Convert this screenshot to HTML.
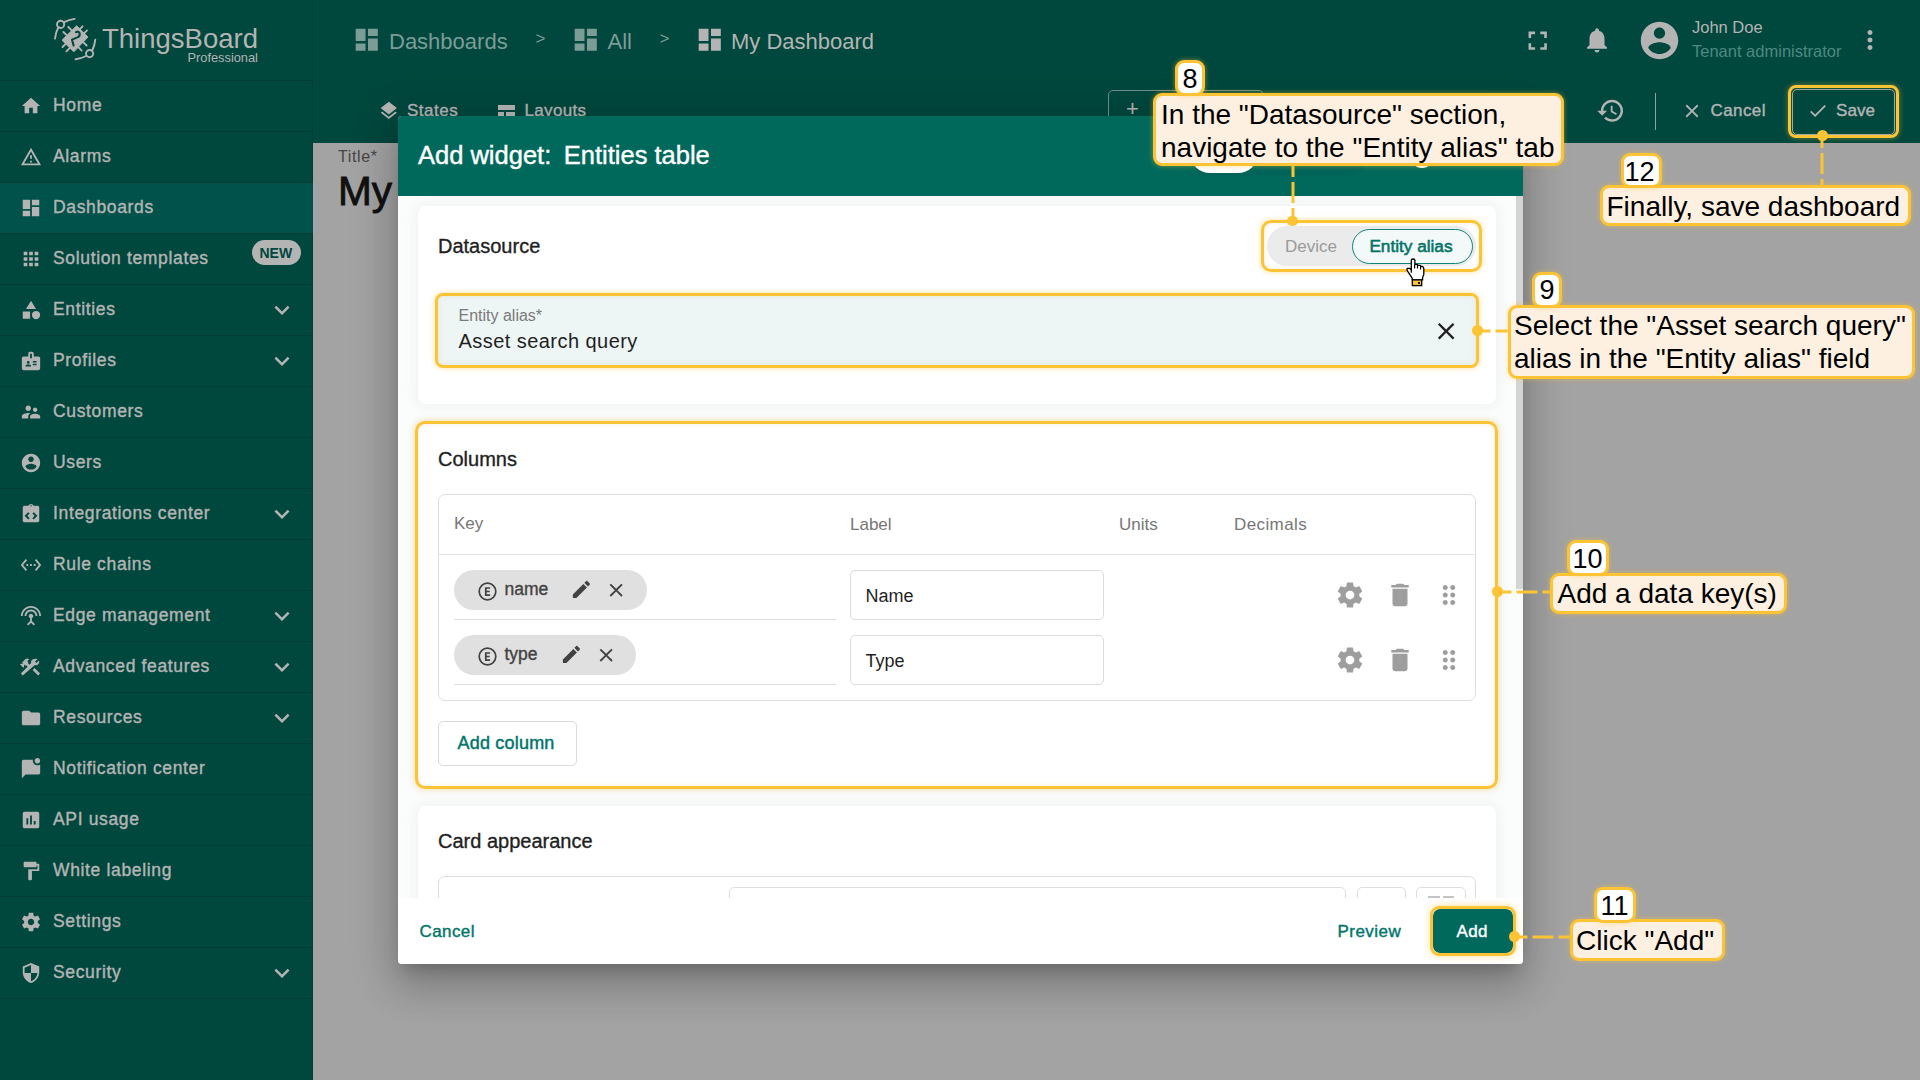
<!DOCTYPE html><html><head><meta charset="utf-8"><style>
html,body{margin:0;padding:0;width:1920px;height:1080px;overflow:hidden;background:#a3a3a3;font-family:"Liberation Sans", sans-serif;}
.t{position:absolute;white-space:nowrap;line-height:1;}
.i{position:absolute;display:block;}
.b{position:absolute;box-sizing:border-box;}

</style></head><body>
<div class="b" style="left:0.00px;top:0.00px;width:313.00px;height:1080.00px;background:#00473d;"></div>
<div class="b" style="left:312.00px;top:0.00px;width:1.00px;height:1080.00px;background:#003e36;"></div>
<div class="b" style="left:0.00px;top:80.00px;width:312.00px;height:1.00px;background:#003e35;"></div>
<svg class="i" style="left:20.00px;top:94.50px;" width="22" height="22" viewBox="0 0 24 24"><path fill="#b4b4b4" d="M10 20v-6h4v6h5v-8h3L12 3 2 12h3v8z"/></svg>
<div class="t" style="left:53.00px;top:96.79px;font-size:17.5px;color:#b4b4b4;font-weight:400;-webkit-text-stroke:0.4px #b4b4b4;letter-spacing:0.65px;">Home</div>
<div class="b" style="left:0.00px;top:131.00px;width:312.00px;height:1.00px;background:#003e35;"></div>
<svg class="i" style="left:20.00px;top:145.50px;" width="22" height="22" viewBox="0 0 24 24"><path fill="#b4b4b4" d="M12 5.99L19.53 19H4.47L12 5.99M12 2L1 21h22L12 2zm1 14h-2v2h2v-2zm0-6h-2v4h2v-4z"/></svg>
<div class="t" style="left:53.00px;top:147.79px;font-size:17.5px;color:#b4b4b4;font-weight:400;-webkit-text-stroke:0.4px #b4b4b4;letter-spacing:0.65px;">Alarms</div>
<div class="b" style="left:0.00px;top:183.00px;width:313.00px;height:50.00px;background:#00524a;"></div>
<div class="b" style="left:0.00px;top:182.00px;width:312.00px;height:1.00px;background:#003e35;"></div>
<svg class="i" style="left:20.00px;top:196.50px;" width="22" height="22" viewBox="0 0 24 24"><path fill="#b4b4b4" d="M3 13h8V3H3v10zm0 8h8v-6H3v6zm10 0h8V11h-8v10zm0-18v6h8V3h-8z"/></svg>
<div class="t" style="left:53.00px;top:198.79px;font-size:17.5px;color:#b4b4b4;font-weight:400;-webkit-text-stroke:0.4px #b4b4b4;letter-spacing:0.65px;">Dashboards</div>
<div class="b" style="left:0.00px;top:233.00px;width:312.00px;height:1.00px;background:#003e35;"></div>
<svg class="i" style="left:20.00px;top:247.50px;" width="22" height="22" viewBox="0 0 24 24"><path fill="#b4b4b4" d="M4 8h4V4H4v4zm6 12h4v-4h-4v4zm-6 0h4v-4H4v4zm0-6h4v-4H4v4zm6 0h4v-4h-4v4zm6-10v4h4V4h-4zm-6 4h4V4h-4v4zm6 6h4v-4h-4v4zm0 6h4v-4h-4v4z"/></svg>
<div class="t" style="left:53.00px;top:249.79px;font-size:17.5px;color:#b4b4b4;font-weight:400;-webkit-text-stroke:0.4px #b4b4b4;letter-spacing:0.65px;">Solution templates</div>
<div class="b" style="left:0.00px;top:284.00px;width:312.00px;height:1.00px;background:#003e35;"></div>
<svg class="i" style="left:20.00px;top:298.50px;" width="22" height="22" viewBox="0 0 24 24"><path fill="#b4b4b4" d="M12 2l-5.5 9h11z M13 17.5a4.5 4.5 0 1 0 9 0a4.5 4.5 0 1 0 -9 0z M3 13.5h8v8H3z"/></svg>
<div class="t" style="left:53.00px;top:300.79px;font-size:17.5px;color:#b4b4b4;font-weight:400;-webkit-text-stroke:0.4px #b4b4b4;letter-spacing:0.65px;">Entities</div>
<svg class="i" style="left:267.00px;top:294.50px;" width="30" height="30" viewBox="0 0 24 24"><path fill="#b4b4b4" d="M16.59 8.59L12 13.17 7.41 8.59 6 10l6 6 6-6z"/></svg>
<div class="b" style="left:0.00px;top:335.00px;width:312.00px;height:1.00px;background:#003e35;"></div>
<svg class="i" style="left:20.00px;top:349.50px;" width="22" height="22" viewBox="0 0 24 24"><path fill="#b4b4b4" d="M20 7h-5V4c0-1.1-.9-2-2-2h-2c-1.1 0-2 .9-2 2v3H4c-1.1 0-2 .9-2 2v11c0 1.1.9 2 2 2h16c1.1 0 2-.9 2-2V9c0-1.1-.9-2-2-2zM9 12c.83 0 1.5.67 1.5 1.5S9.830 15 9 15s-1.5-.67-1.5-1.5S8.17 12 9 12zm3 6H6v-.43c0-.6.36-1.15.92-1.39.64-.28 1.34-.43 2.08-.43s1.44.15 2.08.43c.55.24.92.78.92 1.39V18zm1-9h-2V4h2v5zm5 7.5h-4V15h4v1.5zm0-3h-4V12h4v1.5z"/></svg>
<div class="t" style="left:53.00px;top:351.79px;font-size:17.5px;color:#b4b4b4;font-weight:400;-webkit-text-stroke:0.4px #b4b4b4;letter-spacing:0.65px;">Profiles</div>
<svg class="i" style="left:267.00px;top:345.50px;" width="30" height="30" viewBox="0 0 24 24"><path fill="#b4b4b4" d="M16.59 8.59L12 13.17 7.41 8.59 6 10l6 6 6-6z"/></svg>
<div class="b" style="left:0.00px;top:386.00px;width:312.00px;height:1.00px;background:#003e35;"></div>
<svg class="i" style="left:20.00px;top:400.50px;" width="22" height="22" viewBox="0 0 24 24"><path fill="#b4b4b4" d="M16.5 12c1.38 0 2.49-1.12 2.49-2.5S17.88 7 16.5 7C15.12 7 14 8.12 14 9.5s1.12 2.5 2.5 2.5zM9 11c1.66 0 2.99-1.34 2.99-3S10.66 5 9 5C7.34 5 6 6.34 6 8s1.340 3 3 3zm7.5 3c-1.83 0-5.5.92-5.5 2.75V19h11v-2.25c0-1.83-3.67-2.75-5.5-2.75zM9 13c-2.34 0-7 1.17-7 3.5V19h7v-2.25c0-.85.33-2.34 2.37-3.47C10.5 13.1 9.660 13 9 13z"/></svg>
<div class="t" style="left:53.00px;top:402.79px;font-size:17.5px;color:#b4b4b4;font-weight:400;-webkit-text-stroke:0.4px #b4b4b4;letter-spacing:0.65px;">Customers</div>
<div class="b" style="left:0.00px;top:437.00px;width:312.00px;height:1.00px;background:#003e35;"></div>
<svg class="i" style="left:20.00px;top:451.50px;" width="22" height="22" viewBox="0 0 24 24"><path fill="#b4b4b4" d="M12 2C6.48 2 2 6.48 2 12s4.48 10 10 10 10-4.48 10-10S17.52 2 12 2zm0 3c1.66 0 3 1.34 3 3s-1.34 3-3 3-3-1.34-3-3 1.34-3 3-3zm0 14.2c-2.5 0-4.71-1.28-6-3.22.03-1.99 4-3.08 6-3.08 1.99 0 5.97 1.09 6 3.08-1.29 1.94-3.5 3.22-6 3.22z"/></svg>
<div class="t" style="left:53.00px;top:453.79px;font-size:17.5px;color:#b4b4b4;font-weight:400;-webkit-text-stroke:0.4px #b4b4b4;letter-spacing:0.65px;">Users</div>
<div class="b" style="left:0.00px;top:488.00px;width:312.00px;height:1.00px;background:#003e35;"></div>
<svg class="i" style="left:20.00px;top:502.50px;" width="22" height="22" viewBox="0 0 24 24"><path fill="#b4b4b4" d="M19 3h-4.18C14.4 1.84 13.3 1 12 1s-2.4.84-2.82 2H5c-1.1 0-2 .9-2 2v14c0 1.1.9 2 2 2h14c1.1 0 2-.9 2-2V5c0-1.1-.9-2-2-2zm-8.5 13.5L9 18l-4-4 4-4 1.5 1.5L8 14l2.5 2.5zM12 3.75c-.41 0-.75-.34-.75-.75s.34-.75.75-.75.75.34.75.75-.34.75-.75.75zM15 18l-1.5-1.5L16 14l-2.5-2.5L15 10l4 4-4 4z"/></svg>
<div class="t" style="left:53.00px;top:504.79px;font-size:17.5px;color:#b4b4b4;font-weight:400;-webkit-text-stroke:0.4px #b4b4b4;letter-spacing:0.65px;">Integrations center</div>
<svg class="i" style="left:267.00px;top:498.50px;" width="30" height="30" viewBox="0 0 24 24"><path fill="#b4b4b4" d="M16.59 8.59L12 13.17 7.41 8.59 6 10l6 6 6-6z"/></svg>
<div class="b" style="left:0.00px;top:539.00px;width:312.00px;height:1.00px;background:#003e35;"></div>
<svg class="i" style="left:20.00px;top:553.50px;" width="22" height="22" viewBox="0 0 24 24"><path fill="#b4b4b4" d="M7.77 6.76L6.23 5.48.82 12l5.41 6.52 1.54-1.28L3.42 12l4.35-5.24zM7 13h2v-2H7v2zm10-2h-2v2h2v-2zm-6 2h2v-2h-2v2zm6.77-7.52l-1.54 1.28L20.58 12l-4.35 5.24 1.54 1.28L23.18 12l-5.41-6.52z"/></svg>
<div class="t" style="left:53.00px;top:555.79px;font-size:17.5px;color:#b4b4b4;font-weight:400;-webkit-text-stroke:0.4px #b4b4b4;letter-spacing:0.65px;">Rule chains</div>
<div class="b" style="left:0.00px;top:590.00px;width:312.00px;height:1.00px;background:#003e35;"></div>
<svg class="i" style="left:20.00px;top:604.50px;" width="22" height="22" viewBox="0 0 24 24"><path fill="#b4b4b4" d="M12 5c-3.87 0-7 3.13-7 7h2c0-2.76 2.24-5 5-5s5 2.24 5 5h2c0-3.87-3.13-7-7-7zm1 9.29c.88-.39 1.5-1.26 1.5-2.29 0-1.38-1.12-2.5-2.5-2.5S9.5 10.62 9.5 12c0 1.02.62 1.9 1.5 2.29v3.3L7.59 21 9 22.41l3-3 3 3L16.41 21 13 17.59v-3.3zM12 1C5.93 1 1 5.93 1 12h2c0-4.97 4.03-9 9-9s9 4.030 9 9h2c0-6.07-4.93-11-11-11z"/></svg>
<div class="t" style="left:53.00px;top:606.79px;font-size:17.5px;color:#b4b4b4;font-weight:400;-webkit-text-stroke:0.4px #b4b4b4;letter-spacing:0.65px;">Edge management</div>
<svg class="i" style="left:267.00px;top:600.50px;" width="30" height="30" viewBox="0 0 24 24"><path fill="#b4b4b4" d="M16.59 8.59L12 13.17 7.41 8.59 6 10l6 6 6-6z"/></svg>
<div class="b" style="left:0.00px;top:641.00px;width:312.00px;height:1.00px;background:#003e35;"></div>
<svg class="i" style="left:20.00px;top:655.50px;" width="22" height="22" viewBox="0 0 24 24"><path fill="#b4b4b4" d="M13.783 15.172l2.121-2.121 5.996 5.996-2.121 2.121zM17.5 10c1.93 0 3.5-1.57 3.5-3.5 0-.58-.16-1.12-.41-1.6l-2.7 2.7-1.49-1.49 2.7-2.7c-.48-.25-1.02-.41-1.6-.41C13.57 3 12 4.57 12 6.5c0 .41.08.8.21 1.16l-1.85 1.85-1.78-1.78.71-.71-1.41-1.41L10 3.49c-1.17-1.17-3.07-1.17-4.24 0L2.22 7.03l1.41 1.41H.81l-.71.71 3.54 3.54.71-.71V9.15l1.41 1.41.71-.71 1.78 1.78-7.41 7.41 2.12 2.12L16.34 9.790c.36.13.75.21 1.16.21z"/></svg>
<div class="t" style="left:53.00px;top:657.79px;font-size:17.5px;color:#b4b4b4;font-weight:400;-webkit-text-stroke:0.4px #b4b4b4;letter-spacing:0.65px;">Advanced features</div>
<svg class="i" style="left:267.00px;top:651.50px;" width="30" height="30" viewBox="0 0 24 24"><path fill="#b4b4b4" d="M16.59 8.59L12 13.17 7.41 8.59 6 10l6 6 6-6z"/></svg>
<div class="b" style="left:0.00px;top:692.00px;width:312.00px;height:1.00px;background:#003e35;"></div>
<svg class="i" style="left:20.00px;top:706.50px;" width="22" height="22" viewBox="0 0 24 24"><path fill="#b4b4b4" d="M10 4H4c-1.1 0-1.99.9-1.99 2L2 18c0 1.1.9 2 2 2h16c1.1 0 2-.9 2-2V8c0-1.1-.9-2-2-2h-8l-2-2z"/></svg>
<div class="t" style="left:53.00px;top:708.79px;font-size:17.5px;color:#b4b4b4;font-weight:400;-webkit-text-stroke:0.4px #b4b4b4;letter-spacing:0.65px;">Resources</div>
<svg class="i" style="left:267.00px;top:702.50px;" width="30" height="30" viewBox="0 0 24 24"><path fill="#b4b4b4" d="M16.59 8.59L12 13.17 7.41 8.59 6 10l6 6 6-6z"/></svg>
<div class="b" style="left:0.00px;top:743.00px;width:312.00px;height:1.00px;background:#003e35;"></div>
<svg class="i" style="left:20.00px;top:757.50px;" width="22" height="22" viewBox="0 0 24 24"><path fill="#b4b4b4" d="M22 6.98V16c0 1.1-.9 2-2 2H6l-4 4V4c0-1.1.9-2 2-2h10.1c-.06.32-.1.66-.1 1 0 2.76 2.24 5 5 5 1.13 0 2.16-.39 3-1.02zM16 3c0 1.66 1.34 3 3 3s3-1.34 3-3-1.34-3-3-3-3 1.34-3 3z"/></svg>
<div class="t" style="left:53.00px;top:759.79px;font-size:17.5px;color:#b4b4b4;font-weight:400;-webkit-text-stroke:0.4px #b4b4b4;letter-spacing:0.65px;">Notification center</div>
<div class="b" style="left:0.00px;top:794.00px;width:312.00px;height:1.00px;background:#003e35;"></div>
<svg class="i" style="left:20.00px;top:808.50px;" width="22" height="22" viewBox="0 0 24 24"><path fill="#b4b4b4" d="M19 3H5c-1.1 0-2 .9-2 2v14c0 1.1.9 2 2 2h14c1.1 0 2-.9 2-2V5c0-1.1-.9-2-2-2zM9 17H7v-7h2v7zm4 0h-2V7h2v10zm4 0h-2v-4h2v4z"/></svg>
<div class="t" style="left:53.00px;top:810.79px;font-size:17.5px;color:#b4b4b4;font-weight:400;-webkit-text-stroke:0.4px #b4b4b4;letter-spacing:0.65px;">API usage</div>
<div class="b" style="left:0.00px;top:845.00px;width:312.00px;height:1.00px;background:#003e35;"></div>
<svg class="i" style="left:20.00px;top:859.50px;" width="22" height="22" viewBox="0 0 24 24"><path fill="#b4b4b4" d="M18 4V3c0-.55-.45-1-1-1H5c-.55 0-1 .45-1 1v4c0 .55.45 1 1 1h12c.55 0 1-.45 1-1V6h1v4H9v11c0 .55.45 1 1 1h2c.55 0 1-.45 1-1v-9h8V4h-3z"/></svg>
<div class="t" style="left:53.00px;top:861.79px;font-size:17.5px;color:#b4b4b4;font-weight:400;-webkit-text-stroke:0.4px #b4b4b4;letter-spacing:0.65px;">White labeling</div>
<div class="b" style="left:0.00px;top:896.00px;width:312.00px;height:1.00px;background:#003e35;"></div>
<svg class="i" style="left:20.00px;top:910.50px;" width="22" height="22" viewBox="0 0 24 24"><path fill="#b4b4b4" d="M19.43 12.98c.04-.32.07-.64.07-.98s-.03-.66-.07-.98l2.11-1.65c.19-.15.24-.42.12-.64l-2-3.46c-.12-.22-.39-.3-.61-.22l-2.49 1c-.52-.4-1.08-.73-1.69-.98l-.38-2.65C14.46 2.18 14.25 2 14 2h-4c-.25 0-.46.18-.49.42l-.38 2.65c-.61.25-1.17.59-1.69.98l-2.49-1c-.23-.09-.49 0-.61.22l-2 3.46c-.13.22-.07.49.12.64l2.11 1.65c-.04.32-.07.65-.07.98s.03.66.07.98l-2.11 1.65c-.19.15-.24.42-.12.64l2 3.46c.12.22.39.3.61.22l2.49-1c.52.4 1.08.73 1.69.98l.38 2.65c.03.24.24.42.49.42h4c.25 0 .46-.18.49-.42l.38-2.65c.61-.25 1.17-.59 1.69-.98l2.49 1c.23.09.49 0 .61-.22l2-3.46c.12-.22.07-.49-.12-.64l-2.11-1.65zM12 15.5c-1.93 0-3.5-1.57-3.5-3.5s1.57-3.5 3.5-3.5 3.5 1.57 3.5 3.5-1.57 3.5-3.5 3.5z"/></svg>
<div class="t" style="left:53.00px;top:912.79px;font-size:17.5px;color:#b4b4b4;font-weight:400;-webkit-text-stroke:0.4px #b4b4b4;letter-spacing:0.65px;">Settings</div>
<div class="b" style="left:0.00px;top:947.00px;width:312.00px;height:1.00px;background:#003e35;"></div>
<svg class="i" style="left:20.00px;top:961.50px;" width="22" height="22" viewBox="0 0 24 24"><path fill="#b4b4b4" d="M12 1L3 5v6c0 5.55 3.84 10.74 9 12 5.16-1.26 9-6.45 9-12V5l-9-4zm0 10.99h7c-.53 4.12-3.28 7.79-7 8.94V12H5V6.3l7-3.11v8.8z"/></svg>
<div class="t" style="left:53.00px;top:963.79px;font-size:17.5px;color:#b4b4b4;font-weight:400;-webkit-text-stroke:0.4px #b4b4b4;letter-spacing:0.65px;">Security</div>
<svg class="i" style="left:267.00px;top:957.50px;" width="30" height="30" viewBox="0 0 24 24"><path fill="#b4b4b4" d="M16.59 8.59L12 13.17 7.41 8.59 6 10l6 6 6-6z"/></svg>
<div class="b" style="left:0.00px;top:998.00px;width:312.00px;height:1.00px;background:#003e35;"></div>
<div class="b" style="left:251.50px;top:239.50px;width:49.00px;height:25.00px;background:#b4b4b4;border-radius:13px;"></div>
<div class="t" style="left:259.50px;top:245.85px;font-size:14px;color:#00473d;font-weight:700;">NEW</div>
<svg class="i" style="left:50px;top:14px" width="50" height="50" viewBox="0 0 50 50">
<g fill="none" stroke="#b4b4b4" stroke-width="1.9" stroke-linecap="round">
<circle cx="10.6" cy="10.4" r="3.6"/><circle cx="39.6" cy="39.6" r="3.6"/>
<path d="M14 8.2 Q19 5.6 24.6 4.9"/><path d="M8.3 13.5 Q5.6 18.5 5 24.6"/>
<path d="M42.2 36.5 Q44.6 31.5 45.3 25.6"/><path d="M36.2 42 Q31 44.6 25.6 45.3"/>
<path d="M18.3 13.0 L22.2 16.9 M13.4 18.0 L17.4 21.9 M32.6 12.3 L28.9 16.0 M37.0 16.4 L33.3 20.1 M36.6 31.5 L32.9 27.8 M31.7 36.6 L28.0 32.9 M12.5 33.0 L16.2 29.3 M16.4 37.3 L20.1 33.6"/>
</g>
<path fill="#b4b4b4" stroke="#b4b4b4" stroke-width="1" stroke-linejoin="round" d="M26.6 11.8 L38 23.1 L23.8 37.8 L12 26.2 Z"/>
<path fill="none" stroke="#00473d" stroke-width="2.1" stroke-linecap="round" stroke-linejoin="round" d="M26 18.2 Q28.6 16.6 29.6 19.2 Q30.4 22 27.4 23.4 L22 25.6 L23.6 31.6"/>
</svg>
<div class="t" style="left:102.00px;top:24.52px;font-size:27.5px;color:#b4b4b4;font-weight:400;">ThingsBoard</div>
<div class="t" style="left:187.50px;top:52.16px;font-size:12.8px;color:#b4b4b4;font-weight:400;">Professional</div>
<div class="b" style="left:313.00px;top:0.00px;width:1607.00px;height:143.00px;background:#00473d;"></div>
<svg class="i" style="left:352.40px;top:25.20px;" width="29.5" height="29.5" viewBox="0 0 24 24"><path fill="#7c9c96" d="M3 13h8V3H3v10zm0 8h8v-6H3v6zm10 0h8V11h-8v10zm0-18v6h8V3h-8z"/></svg>
<div class="t" style="left:389.00px;top:31.38px;font-size:22px;color:#7c9c96;font-weight:400;">Dashboards</div>
<div class="t" style="left:535.50px;top:30.11px;font-size:17px;color:#7c9c96;font-weight:400;">&gt;</div>
<svg class="i" style="left:571.30px;top:25.20px;" width="29.5" height="29.5" viewBox="0 0 24 24"><path fill="#7c9c96" d="M3 13h8V3H3v10zm0 8h8v-6H3v6zm10 0h8V11h-8v10zm0-18v6h8V3h-8z"/></svg>
<div class="t" style="left:607.50px;top:31.38px;font-size:22px;color:#7c9c96;font-weight:400;">All</div>
<div class="t" style="left:659.50px;top:30.11px;font-size:17px;color:#7c9c96;font-weight:400;">&gt;</div>
<svg class="i" style="left:695.20px;top:25.20px;" width="29.5" height="29.5" viewBox="0 0 24 24"><path fill="#b4b4b4" d="M3 13h8V3H3v10zm0 8h8v-6H3v6zm10 0h8V11h-8v10zm0-18v6h8V3h-8z"/></svg>
<div class="t" style="left:731.00px;top:31.38px;font-size:22px;color:#b4b4b4;font-weight:400;">My Dashboard</div>
<svg class="i" style="left:1521.80px;top:24.50px;" width="31.4" height="31.4" viewBox="0 0 24 24"><path fill="#b4b4b4" d="M7 14H5v5h5v-2H7v-3zm-2-4h2V7h3V5H5v5zm12 7h-3v2h5v-5h-2v3zM14 5v2h3v3h2V5h-5z"/></svg>
<svg class="i" style="left:1582.00px;top:25.00px;" width="30" height="30" viewBox="0 0 24 24"><path fill="#b4b4b4" d="M12 22c1.1 0 2-.9 2-2h-4c0 1.1.89 2 2 2zm6-6v-5c0-3.07-1.64-5.64-4.5-6.32V4c0-.83-.67-1.5-1.5-1.5s-1.5.67-1.5 1.5v.68C7.63 5.36 6 7.92 6 11v5l-2 2v1h16v-1l-2-2z"/></svg>
<svg class="i" style="left:1637.20px;top:18.00px;" width="45" height="45" viewBox="0 0 24 24"><path fill="#b4b4b4" d="M12 2C6.48 2 2 6.48 2 12s4.48 10 10 10 10-4.48 10-10S17.52 2 12 2zm0 3c1.66 0 3 1.34 3 3s-1.34 3-3 3-3-1.34-3-3 1.34-3 3-3zm0 14.2c-2.5 0-4.71-1.28-6-3.22.03-1.99 4-3.08 6-3.08 1.99 0 5.97 1.09 6 3.08-1.29 1.94-3.5 3.22-6 3.22z"/></svg>
<div class="t" style="left:1692.00px;top:19.43px;font-size:16.5px;color:#b4b4b4;font-weight:400;">John Doe</div>
<div class="t" style="left:1692.00px;top:43.03px;font-size:16.5px;color:#4e8a80;font-weight:400;">Tenant administrator</div>
<svg class="i" style="left:1855.00px;top:25.00px;" width="30" height="30" viewBox="0 0 24 24"><path fill="#b4b4b4" d="M12 8c1.1 0 2-.9 2-2s-.9-2-2-2-2 .9-2 2 .9 2 2 2zm0 2c-1.1 0-2 .9-2 2s.9 2 2 2 2-.9 2-2-.9-2-2-2zm0 6c-1.1 0-2 .9-2 2s.9 2 2 2 2-.9 2-2-.9-2-2-2z"/></svg>
<svg class="i" style="left:378.10px;top:99.90px;" width="21.6" height="21.6" viewBox="0 0 24 24"><path fill="#b4b4b4" d="M11.99 18.54l-7.37-5.73L3 14.07l9 7 9-7-1.63-1.27-7.38 5.74zM12 16l7.36-5.73L21 9l-9-7-9 7 1.63 1.27L12 16z"/></svg>
<div class="t" style="left:407.00px;top:102.21px;font-size:17px;color:#b4b4b4;font-weight:400;-webkit-text-stroke:0.4px #b4b4b4;letter-spacing:0.5px;">States</div>
<div class="b" style="left:497.60px;top:104.50px;width:17.20px;height:5.50px;background:#b4b4b4;"></div>
<div class="b" style="left:497.60px;top:111.50px;width:6.50px;height:7.00px;background:#b4b4b4;"></div>
<div class="b" style="left:506.00px;top:111.50px;width:8.80px;height:7.00px;background:#b4b4b4;"></div>
<div class="t" style="left:524.60px;top:102.21px;font-size:17px;color:#b4b4b4;font-weight:400;-webkit-text-stroke:0.4px #b4b4b4;letter-spacing:0.3px;">Layouts</div>
<div class="b" style="left:1108.00px;top:89.50px;width:156.00px;height:60.00px;border:1px solid #6f8e89;border-radius:5px;"></div>
<div class="t" style="left:1126.00px;top:98.38px;font-size:22px;color:#b4b4b4;font-weight:400;">+</div>
<svg class="i" style="left:1595.50px;top:96.10px;" width="29.5" height="29.5" viewBox="0 0 24 24"><path fill="#b4b4b4" d="M13 3c-4.97 0-9 4.03-9 9H1l3.89 3.89.07.14L9 12H6c0-3.87 3.13-7 7-7s7 3.13 7 7-3.13 7-7 7c-1.93 0-3.68-.79-4.94-2.06l-1.42 1.42C8.27 19.99 10.51 21 13 21c4.97 0 9-4.03 9-9s-4.03-9-9-9zm-1 5v5l4.28 2.54.72-1.21-3.5-2.08V8H12z"/></svg>
<div class="b" style="left:1655.00px;top:93.00px;width:1.20px;height:37.00px;background:#8aa39e;"></div>
<svg class="i" style="left:1681.00px;top:100.00px;" width="22" height="22" viewBox="0 0 24 24"><path fill="#b4b4b4" d="M19 6.41L17.59 5 12 10.59 6.41 5 5 6.41 10.59 12 5 17.59 6.41 19 12 13.41 17.59 19 19 17.59 13.41 12z"/></svg>
<div class="t" style="left:1710.50px;top:102.21px;font-size:17px;color:#b4b4b4;font-weight:400;-webkit-text-stroke:0.4px #b4b4b4;letter-spacing:0.4px;">Cancel</div>
<div class="b" style="left:1792.30px;top:88.60px;width:103.00px;height:46.00px;border:1px solid #9aa7a4;border-radius:5px;"></div>
<svg class="i" style="left:1806.90px;top:100.40px;" width="21.6" height="21.6" viewBox="0 0 24 24"><path fill="#b4b4b4" d="M9 16.17L4.83 12l-1.42 1.41L9 19 21 7l-1.41-1.41z"/></svg>
<div class="t" style="left:1836.00px;top:102.21px;font-size:17px;color:#b4b4b4;font-weight:400;-webkit-text-stroke:0.4px #b4b4b4;letter-spacing:0.1px;">Save</div>
<div class="t" style="left:338.00px;top:149.06px;font-size:16px;color:#464646;font-weight:400;letter-spacing:0.6px;">Title*</div>
<div class="t" style="left:338.00px;top:170.52px;font-size:40.5px;color:#111111;font-weight:400;-webkit-text-stroke:0.9px #111111;">My</div>
<div class="b" style="left:398.00px;top:116.00px;width:1125.00px;height:848.00px;background:#ffffff;border-radius:4px;box-shadow:0 11px 15px -7px rgba(0,0,0,.2),0 24px 38px 3px rgba(0,0,0,.14),0 9px 46px 8px rgba(0,0,0,.12);"></div>
<div class="b" style="left:398.00px;top:116.00px;width:1125.00px;height:80.00px;background:#00695c;border-radius:4px 4px 0 0;"></div>
<div class="t" style="left:418.00px;top:142.71px;font-size:25.5px;color:#ffffff;font-weight:400;-webkit-text-stroke:0.4px #ffffff;">Add widget:</div>
<div class="t" style="left:563.80px;top:142.71px;font-size:25.5px;color:#ffffff;font-weight:400;-webkit-text-stroke:0.4px #ffffff;">Entities table</div>
<div class="b" style="left:1185.00px;top:128.00px;width:185.00px;height:48.00px;background:#00645a;border-radius:24px;"></div>
<div class="b" style="left:1189.50px;top:132.00px;width:68.00px;height:41.00px;background:#ffffff;border-radius:20px;"></div>
<div class="b" style="left:1411.00px;top:140.00px;width:22.00px;height:28.00px;background:#ffffff;border-radius:11px;"></div>
<div class="b" style="left:398.00px;top:196.00px;width:1125.00px;height:702.00px;background:#fbfcfc;"></div>
<div class="b" style="left:1516.00px;top:196.00px;width:7.00px;height:393.00px;background:#d4d4d4;"></div>
<div class="b" style="left:418.00px;top:206.00px;width:1078.00px;height:198.00px;background:#ffffff;border-radius:8px;box-shadow:0 0 12px 4px rgba(40,60,80,0.045);"></div>
<div class="b" style="left:418.00px;top:424.00px;width:1078.00px;height:362.00px;background:#ffffff;border-radius:8px;box-shadow:0 0 12px 4px rgba(40,60,80,0.045);"></div>
<div class="b" style="left:418.00px;top:806.00px;width:1078.00px;height:120.00px;background:#ffffff;border-radius:8px;box-shadow:0 0 12px 4px rgba(40,60,80,0.045);"></div>
<div class="t" style="left:438.00px;top:236.07px;font-size:20px;color:#1f1f1f;font-weight:400;-webkit-text-stroke:0.35px #1f1f1f;">Datasource</div>
<div class="b" style="left:1266.90px;top:226.00px;width:208.70px;height:39.60px;background:#ebebeb;border-radius:20px;"></div>
<div class="b" style="left:1351.90px;top:228.75px;width:121.10px;height:35.25px;background:#f3f8f8;border:1.6px solid #11847a;border-radius:18px;"></div>
<div class="t" style="left:1285.00px;top:237.51px;font-size:17px;color:#9a9a9a;font-weight:400;">Device</div>
<div class="t" style="left:1369.40px;top:238.44px;font-size:17.2px;color:#007366;font-weight:400;-webkit-text-stroke:0.55px #007366;">Entity alias</div>
<div class="b" style="left:438.00px;top:296.00px;width:1038.00px;height:69.00px;background:#edf5f5;border-radius:5px;"></div>
<div class="t" style="left:458.50px;top:307.56px;font-size:16px;color:#7a7a7a;font-weight:400;">Entity alias*</div>
<div class="t" style="left:458.50px;top:330.57px;font-size:20px;color:#1f1f1f;font-weight:400;letter-spacing:0.45px;">Asset search query</div>
<svg class="i" style="left:1431.80px;top:316.85px;" width="28.3" height="28.3" viewBox="0 0 24 24"><path fill="#212121" d="M19 6.41L17.59 5 12 10.59 6.41 5 5 6.41 10.59 12 5 17.59 6.41 19 12 13.41 17.59 19 19 17.59 13.41 12z"/></svg>
<div class="t" style="left:438.00px;top:449.07px;font-size:20px;color:#1f1f1f;font-weight:400;-webkit-text-stroke:0.35px #1f1f1f;">Columns</div>
<div class="b" style="left:438.00px;top:494.00px;width:1038.00px;height:207.00px;border:1px solid #dedede;border-radius:7px;"></div>
<div class="b" style="left:438.00px;top:554.00px;width:1038.00px;height:1.00px;background:#e0e0e0;"></div>
<div class="t" style="left:454.00px;top:515.41px;font-size:17px;color:#767676;font-weight:400;">Key</div>
<div class="t" style="left:850.00px;top:515.81px;font-size:17px;color:#767676;font-weight:400;">Label</div>
<div class="t" style="left:1119.00px;top:515.81px;font-size:17px;color:#767676;font-weight:400;">Units</div>
<div class="t" style="left:1234.00px;top:515.81px;font-size:17px;color:#767676;font-weight:400;letter-spacing:0.4px;">Decimals</div>
<div class="b" style="left:454.00px;top:570.00px;width:193.00px;height:40.00px;background:#e0e0e0;border-radius:20px;"></div>
<svg class="i" style="left:478px;top:582px" width="19" height="19" viewBox="0 0 19 19"><circle cx="9.5" cy="9.5" r="8.3" fill="none" stroke="#424242" stroke-width="1.7"/><path d="M6.9 5.2h5.2v1.6H8.7v1.9h3v1.6h-3v2h3.4v1.6H6.9z" fill="#424242"/></svg>
<div class="t" style="left:504.50px;top:580.79px;font-size:17.5px;color:#424242;font-weight:400;-webkit-text-stroke:0.35px #424242;">name</div>
<svg class="i" style="left:570.00px;top:578.20px;" width="22.8" height="22.8" viewBox="0 0 24 24"><path fill="#424242" d="M3 17.25V21h3.75L17.81 9.94l-3.75-3.75L3 17.25zM20.71 7.04c.39-.39.39-1.020 0-1.41l-2.34-2.34c-.39-.39-1.02-.39-1.41 0l-1.83 1.83 3.75 3.75 1.83-1.83z"/></svg>
<svg class="i" style="left:605.40px;top:578.70px;" width="22.3" height="22.3" viewBox="0 0 24 24"><path fill="#424242" d="M19 6.41L17.59 5 12 10.59 6.41 5 5 6.41 10.59 12 5 17.59 6.41 19 12 13.41 17.59 19 19 17.59 13.41 12z"/></svg>
<div class="b" style="left:454.00px;top:619.00px;width:382.00px;height:1.00px;background:#dcdcdc;"></div>
<div class="b" style="left:850.00px;top:570.00px;width:254.00px;height:49.50px;border:1px solid #dcdcdc;border-radius:5px;"></div>
<div class="t" style="left:865.50px;top:586.96px;font-size:18px;color:#1f1f1f;font-weight:400;">Name</div>
<svg class="i" style="left:1334.50px;top:580.00px;" width="30" height="30" viewBox="0 0 24 24"><path fill="#9e9e9e" d="M19.43 12.98c.04-.32.07-.64.07-.98s-.03-.66-.07-.98l2.11-1.65c.19-.15.24-.42.12-.64l-2-3.46c-.12-.22-.39-.3-.61-.22l-2.49 1c-.52-.4-1.08-.73-1.69-.98l-.38-2.65C14.46 2.18 14.25 2 14 2h-4c-.25 0-.46.18-.49.42l-.38 2.65c-.61.25-1.17.59-1.69.98l-2.49-1c-.23-.09-.49 0-.61.22l-2 3.46c-.13.22-.07.49.12.64l2.11 1.65c-.04.32-.07.65-.07.98s.03.66.07.98l-2.11 1.65c-.19.15-.24.42-.12.64l2 3.46c.12.22.39.3.61.22l2.49-1c.52.4 1.08.73 1.69.98l.38 2.65c.03.24.24.42.49.42h4c.25 0 .46-.18.49-.42l.38-2.65c.61-.25 1.17-.59 1.69-.98l2.49 1c.23.09.49 0 .61-.22l2-3.46c.12-.22.07-.49-.12-.64l-2.11-1.65zM12 15.5c-1.93 0-3.5-1.57-3.5-3.5s1.57-3.5 3.5-3.5 3.5 1.57 3.5 3.5-1.57 3.5-3.5 3.5z"/></svg>
<svg class="i" style="left:1384.50px;top:580.00px;" width="30" height="30" viewBox="0 0 24 24"><path fill="#9e9e9e" d="M6 19c0 1.1.9 2 2 2h8c1.1 0 2-.9 2-2V7H6v12zM19 4h-3.5l-1-1h-5l-1 1H5v2h14V4z"/></svg>
<svg class="i" style="left:1434.25px;top:580.00px;" width="30" height="30" viewBox="0 0 24 24"><path fill="#9e9e9e" d="M11 18c0 1.1-.9 2-2 2s-2-.9-2-2 .9-2 2-2 2 .9 2 2zm-2-8c-1.1 0-2 .9-2 2s.9 2 2 2 2-.9 2-2-.9-2-2-2zm0-6c-1.1 0-2 .9-2 2s.9 2 2 2 2-.9 2-2-.9-2-2-2zm6 4c1.1 0 2-.9 2-2s-.9-2-2-2-2 .9-2 2 .9 2 2 2zm0 2c-1.1 0-2 .9-2 2s.9 2 2 2 2-.9 2-2-.9-2-2-2zm0 6c-1.1 0-2 .9-2 2s.9 2 2 2 2-.9 2-2-.9-2-2-2z"/></svg>
<div class="b" style="left:454.00px;top:635.00px;width:182.00px;height:40.00px;background:#e0e0e0;border-radius:20px;"></div>
<svg class="i" style="left:478px;top:647px" width="19" height="19" viewBox="0 0 19 19"><circle cx="9.5" cy="9.5" r="8.3" fill="none" stroke="#424242" stroke-width="1.7"/><path d="M6.9 5.2h5.2v1.6H8.7v1.9h3v1.6h-3v2h3.4v1.6H6.9z" fill="#424242"/></svg>
<div class="t" style="left:504.50px;top:645.79px;font-size:17.5px;color:#424242;font-weight:400;-webkit-text-stroke:0.35px #424242;">type</div>
<svg class="i" style="left:560.00px;top:643.20px;" width="22.8" height="22.8" viewBox="0 0 24 24"><path fill="#424242" d="M3 17.25V21h3.75L17.81 9.94l-3.75-3.75L3 17.25zM20.71 7.04c.39-.39.39-1.020 0-1.41l-2.34-2.34c-.39-.39-1.02-.39-1.41 0l-1.83 1.83 3.75 3.75 1.83-1.83z"/></svg>
<svg class="i" style="left:595.00px;top:643.70px;" width="22.3" height="22.3" viewBox="0 0 24 24"><path fill="#424242" d="M19 6.41L17.59 5 12 10.59 6.41 5 5 6.41 10.59 12 5 17.59 6.41 19 12 13.41 17.59 19 19 17.59 13.41 12z"/></svg>
<div class="b" style="left:454.00px;top:684.00px;width:382.00px;height:1.00px;background:#dcdcdc;"></div>
<div class="b" style="left:850.00px;top:635.00px;width:254.00px;height:49.50px;border:1px solid #dcdcdc;border-radius:5px;"></div>
<div class="t" style="left:865.50px;top:651.96px;font-size:18px;color:#1f1f1f;font-weight:400;">Type</div>
<svg class="i" style="left:1334.50px;top:645.00px;" width="30" height="30" viewBox="0 0 24 24"><path fill="#9e9e9e" d="M19.43 12.98c.04-.32.07-.64.07-.98s-.03-.66-.07-.98l2.11-1.65c.19-.15.24-.42.12-.64l-2-3.46c-.12-.22-.39-.3-.61-.22l-2.49 1c-.52-.4-1.08-.73-1.69-.98l-.38-2.65C14.46 2.18 14.25 2 14 2h-4c-.25 0-.46.18-.49.42l-.38 2.65c-.61.25-1.17.59-1.69.98l-2.49-1c-.23-.09-.49 0-.61.22l-2 3.46c-.13.22-.07.49.12.64l2.11 1.65c-.04.32-.07.65-.07.98s.03.66.07.98l-2.11 1.65c-.19.15-.24.42-.12.64l2 3.46c.12.22.39.3.61.22l2.49-1c.52.4 1.08.73 1.69.98l.38 2.65c.03.24.24.42.49.42h4c.25 0 .46-.18.49-.42l.38-2.65c.61-.25 1.17-.59 1.69-.98l2.49 1c.23.09.49 0 .61-.22l2-3.46c.12-.22.07-.49-.12-.64l-2.11-1.65zM12 15.5c-1.93 0-3.5-1.57-3.5-3.5s1.57-3.5 3.5-3.5 3.5 1.57 3.5 3.5-1.57 3.5-3.5 3.5z"/></svg>
<svg class="i" style="left:1384.50px;top:645.00px;" width="30" height="30" viewBox="0 0 24 24"><path fill="#9e9e9e" d="M6 19c0 1.1.9 2 2 2h8c1.1 0 2-.9 2-2V7H6v12zM19 4h-3.5l-1-1h-5l-1 1H5v2h14V4z"/></svg>
<svg class="i" style="left:1434.25px;top:645.00px;" width="30" height="30" viewBox="0 0 24 24"><path fill="#9e9e9e" d="M11 18c0 1.1-.9 2-2 2s-2-.9-2-2 .9-2 2-2 2 .9 2 2zm-2-8c-1.1 0-2 .9-2 2s.9 2 2 2 2-.9 2-2-.9-2-2-2zm0-6c-1.1 0-2 .9-2 2s.9 2 2 2 2-.9 2-2-.9-2-2-2zm6 4c1.1 0 2-.9 2-2s-.9-2-2-2-2 .9-2 2 .9 2 2 2zm0 2c-1.1 0-2 .9-2 2s.9 2 2 2 2-.9 2-2-.9-2-2-2zm0 6c-1.1 0-2 .9-2 2s.9 2 2 2 2-.9 2-2-.9-2-2-2z"/></svg>
<div class="b" style="left:438.00px;top:721.00px;width:139.00px;height:45.00px;border:1px solid #dadada;border-radius:5px;"></div>
<div class="t" style="left:457.50px;top:733.76px;font-size:18px;color:#00756a;font-weight:400;-webkit-text-stroke:0.45px #00756a;letter-spacing:0.2px;">Add column</div>
<div class="t" style="left:438.00px;top:831.07px;font-size:20px;color:#1f1f1f;font-weight:400;-webkit-text-stroke:0.35px #1f1f1f;">Card appearance</div>
<div class="b" style="left:438.00px;top:876.00px;width:1038.00px;height:60.00px;border:1px solid #dedede;border-radius:7px;"></div>
<div class="b" style="left:729.00px;top:886.50px;width:617.00px;height:40.00px;border:1px solid #dedede;border-radius:5px;"></div>
<div class="b" style="left:1356.50px;top:886.50px;width:49.00px;height:40.00px;border:1px solid #dedede;border-radius:5px;"></div>
<div class="b" style="left:1416.30px;top:886.50px;width:49.50px;height:40.00px;border:1px solid #dedede;border-radius:5px;"></div>
<div class="b" style="left:1428.00px;top:896.00px;width:12.00px;height:2.50px;background:#c4c4c4;"></div>
<div class="b" style="left:1443.00px;top:896.00px;width:11.00px;height:2.50px;background:#c4c4c4;"></div>
<div class="b" style="left:398.00px;top:898.00px;width:1125.00px;height:66.00px;background:#ffffff;border-radius:0 0 4px 4px;"></div>
<div class="t" style="left:419.50px;top:922.61px;font-size:17px;color:#00756a;font-weight:400;-webkit-text-stroke:0.4px #00756a;letter-spacing:0.4px;">Cancel</div>
<div class="t" style="left:1337.50px;top:922.61px;font-size:17px;color:#00756a;font-weight:400;-webkit-text-stroke:0.4px #00756a;letter-spacing:0.45px;">Preview</div>
<div class="b" style="left:1433.30px;top:909.00px;width:79.70px;height:44.00px;background:#00695c;border-radius:7px;"></div>
<div class="t" style="left:1456.50px;top:922.61px;font-size:17px;color:#ffffff;font-weight:400;-webkit-text-stroke:0.4px #ffffff;letter-spacing:0.3px;">Add</div>
<div class="b" style="left:435.00px;top:293.00px;width:1044.00px;height:75.00px;border:3px solid #fcc434;border-radius:8px;box-shadow:0 0 5px 1px rgba(252,196,52,0.35), inset 0 0 4px 1px rgba(215,175,80,0.16);"></div>
<div class="b" style="left:1261.30px;top:220.00px;width:220.70px;height:52.00px;border:3px solid #fcc434;border-radius:10px;box-shadow:0 0 5px 1px rgba(252,196,52,0.35), inset 0 0 4px 1px rgba(215,175,80,0.16);"></div>
<div class="b" style="left:415.00px;top:421.00px;width:1083.00px;height:368.00px;border:3px solid #fcc434;border-radius:10px;box-shadow:0 0 5px 1px rgba(252,196,52,0.35), inset 0 0 4px 1px rgba(215,175,80,0.16);"></div>
<div class="b" style="left:1788.30px;top:85.20px;width:110.50px;height:52.40px;border:3px solid #fcc434;border-radius:8px;box-shadow:0 0 5px 1px rgba(252,196,52,0.35), inset 0 0 4px 1px rgba(215,175,80,0.16);"></div>
<div class="b" style="left:1430.30px;top:906.20px;width:85.60px;height:49.80px;border:3px solid #fcc434;border-radius:9px;box-shadow:0 0 6px 1px rgba(252,196,52,0.4);"></div>
<svg class="i" style="left:1289.5px;top:166px" width="6" height="55"><line x1="3" y1="55" x2="3" y2="0" stroke="#fcc434" stroke-width="3" stroke-dasharray="21 5" stroke-dashoffset="8"/></svg>
<div class="b" style="left:1287.10px;top:215.60px;width:10.80px;height:10.80px;background:#fcc434;border-radius:50%;"></div>
<svg class="i" style="left:1819.4px;top:135.3px" width="6" height="50.69999999999999"><line x1="3" y1="0" x2="3" y2="50.69999999999999" stroke="#fcc434" stroke-width="3" stroke-dasharray="21 5" stroke-dashoffset="8"/></svg>
<div class="b" style="left:1817.00px;top:129.90px;width:10.80px;height:10.80px;background:#fcc434;border-radius:50%;"></div>
<svg class="i" style="left:1477.3px;top:327.7px" width="30.700000000000045" height="6"><line x1="0" y1="3" x2="30.700000000000045" y2="3" stroke="#fcc434" stroke-width="3" stroke-dasharray="21 5" stroke-dashoffset="7.5"/></svg>
<div class="b" style="left:1471.90px;top:325.30px;width:10.80px;height:10.80px;background:#fcc434;border-radius:50%;"></div>
<svg class="i" style="left:1497.8px;top:588.5px" width="53.200000000000045" height="6"><line x1="0" y1="3" x2="53.200000000000045" y2="3" stroke="#fcc434" stroke-width="3" stroke-dasharray="21 5" stroke-dashoffset="7.5"/></svg>
<div class="b" style="left:1492.40px;top:586.10px;width:10.80px;height:10.80px;background:#fcc434;border-radius:50%;"></div>
<svg class="i" style="left:1514.3px;top:933.6px" width="56.700000000000045" height="6"><line x1="0" y1="3" x2="56.700000000000045" y2="3" stroke="#fcc434" stroke-width="3" stroke-dasharray="21 5" stroke-dashoffset="7.5"/></svg>
<div class="b" style="left:1508.90px;top:931.20px;width:10.80px;height:10.80px;background:#fcc434;border-radius:50%;"></div>
<div class="b" style="left:1153.00px;top:93.30px;width:411.00px;height:72.40px;background:#fdf0e1;border:3px solid #fcc434;border-radius:9px;box-shadow:0 0 4px 1px rgba(252,196,52,0.35);"></div>
<div class="t" style="left:1161.00px;top:100.50px;font-size:28px;color:#000000;font-weight:400;">In the "Datasource" section,</div>
<div class="t" style="left:1161.00px;top:134.20px;font-size:28px;color:#000000;font-weight:400;">navigate to the "Entity alias" tab</div>
<div class="b" style="left:1175.00px;top:60.00px;width:30.00px;height:35.50px;background:#ffffff;border:3px solid #fcc434;border-radius:9px;box-shadow:0 0 4px 1px rgba(252,196,52,0.35);"></div>
<div class="t" style="left:1182.50px;top:65.64px;font-size:27px;color:#000000;font-weight:400;">8</div>
<div class="b" style="left:1599.50px;top:185.00px;width:311.00px;height:41.00px;background:#fdf0e1;border:3px solid #fcc434;border-radius:9px;box-shadow:0 0 4px 1px rgba(252,196,52,0.35);"></div>
<div class="t" style="left:1606.50px;top:193.10px;font-size:28px;color:#000000;font-weight:400;">Finally, save dashboard</div>
<div class="b" style="left:1620.50px;top:152.50px;width:41.00px;height:35.50px;background:#ffffff;border:3px solid #fcc434;border-radius:9px;box-shadow:0 0 4px 1px rgba(252,196,52,0.35);"></div>
<div class="t" style="left:1624.50px;top:158.64px;font-size:27px;color:#000000;font-weight:400;">12</div>
<div class="b" style="left:1507.50px;top:304.70px;width:407.90px;height:74.50px;background:#fdf0e1;border:3px solid #fcc434;border-radius:9px;box-shadow:0 0 4px 1px rgba(252,196,52,0.35);"></div>
<div class="t" style="left:1514.00px;top:312.00px;font-size:28px;color:#000000;font-weight:400;">Select the "Asset search query"</div>
<div class="t" style="left:1514.00px;top:345.40px;font-size:28px;color:#000000;font-weight:400;">alias in the "Entity alias" field</div>
<div class="b" style="left:1532.00px;top:272.00px;width:30.00px;height:35.60px;background:#ffffff;border:3px solid #fcc434;border-radius:9px;box-shadow:0 0 4px 1px rgba(252,196,52,0.35);"></div>
<div class="t" style="left:1539.50px;top:277.44px;font-size:27px;color:#000000;font-weight:400;">9</div>
<div class="b" style="left:1550.00px;top:572.50px;width:236.70px;height:41.50px;background:#fdf0e1;border:3px solid #fcc434;border-radius:9px;box-shadow:0 0 4px 1px rgba(252,196,52,0.35);"></div>
<div class="t" style="left:1557.50px;top:580.30px;font-size:28px;color:#000000;font-weight:400;">Add a data key(s)</div>
<div class="b" style="left:1567.10px;top:540.00px;width:41.70px;height:35.60px;background:#ffffff;border:3px solid #fcc434;border-radius:9px;box-shadow:0 0 4px 1px rgba(252,196,52,0.35);"></div>
<div class="t" style="left:1572.50px;top:545.64px;font-size:27px;color:#000000;font-weight:400;">10</div>
<div class="b" style="left:1569.50px;top:919.30px;width:155.80px;height:41.70px;background:#fdf0e1;border:3px solid #fcc434;border-radius:9px;box-shadow:0 0 4px 1px rgba(252,196,52,0.35);"></div>
<div class="t" style="left:1576.00px;top:927.00px;font-size:28px;color:#000000;font-weight:400;">Click "Add"</div>
<div class="b" style="left:1594.00px;top:887.00px;width:42.00px;height:35.50px;background:#ffffff;border:3px solid #fcc434;border-radius:9px;box-shadow:0 0 4px 1px rgba(252,196,52,0.35);"></div>
<div class="t" style="left:1600.50px;top:892.64px;font-size:27px;color:#000000;font-weight:400;">11</div>
<svg class="i" style="left:1400px;top:255px" width="30" height="35" viewBox="0 0 30 35">
<path d="M11.3 5.2 Q11.3 4 13.1 4 Q14.9 4 14.9 5.2 L14.9 9.4 L17.5 9.4 L17.5 10.4 L20.5 10.4 L20.5 11.3 L22.3 11.3 Q23.8 12 23.8 13.6 L23.8 19.5 L22.6 22.6 L22.6 24.9 L12.3 24.9 L12.3 23.3 L7.1 15.4 L7.1 13.3 L9.8 13.3 L11.3 15 Z" fill="#fff" stroke="#000" stroke-width="1.3" stroke-linejoin="round"/>
<path d="M14.6 9.4 L14.6 13.6 M17.5 10.4 L17.5 13.6 M20.6 11.3 L20.6 14.6 M11.3 14.8 L11.3 17.8" stroke="#000" stroke-width="1.2" fill="none"/>
<rect x="12.3" y="24.9" width="9.4" height="5.7" fill="#fcc434" stroke="#000" stroke-width="1.3"/>
<rect x="18.1" y="27" width="1.9" height="1.9" fill="#000"/>
</svg>
</body></html>
